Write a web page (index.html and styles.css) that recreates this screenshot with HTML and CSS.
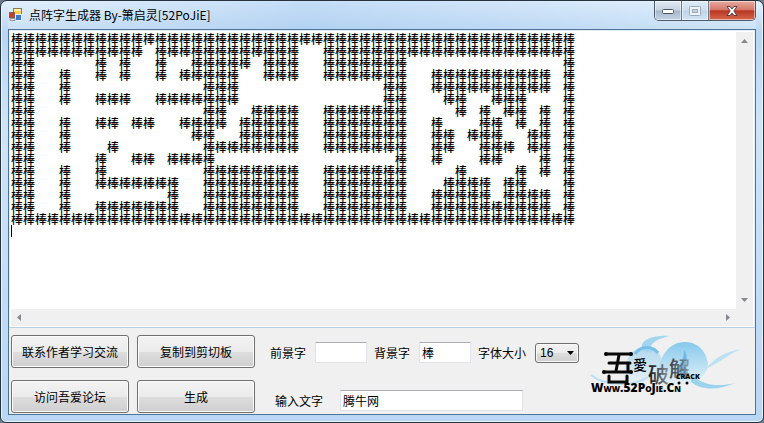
FILE: index.html
```
<!DOCTYPE html>
<html lang="zh-CN">
<head>
<meta charset="utf-8">
<title>点阵字生成器</title>
<link rel="stylesheet" href="styles.css">
</head>
<body>
<div class="window">
  <header class="titlebar">
    <svg class="app-icon" width="14" height="14" viewBox="0 0 14 14" aria-hidden="true">
      <rect x="4.5" y="0.5" width="8" height="7" fill="#ffd24a" stroke="#8d7a4c"/>
      <rect x="5" y="1" width="7" height="2" fill="#fff0b0"/>
      <rect x="0.5" y="4.5" width="5" height="5" fill="#c8402c" stroke="#8a5a50"/>
      <rect x="6.5" y="6.5" width="6" height="6" fill="#3f78d0" stroke="#e8eef8"/>
      <path d="M1 10.500h5v2H1z" fill="#e8e8e8" stroke="#999"/>
    </svg>
    <h1 class="title">点阵字生成器 By-箫启灵[52PoJiE]</h1>
    <div class="caption-buttons">
      <button class="caption minimize" type="button" aria-label="最小化">
        <svg width="14" height="8" viewBox="0 0 14 8"><rect x="1.500" y="2.500" width="11" height="4" rx="1" fill="#fff" stroke="#4c5565"/></svg>
      </button>
      <button class="caption maximize" type="button" aria-label="最大化" disabled>
        <svg width="12" height="10" viewBox="0 0 12 10"><rect x="0.500" y="0.500" width="11" height="9" rx="1" fill="#eef3f8" stroke="#9aa9bb"/><rect x="3.500" y="3.500" width="5" height="3" fill="#c6d4e2" stroke="#9aa9bb"/></svg>
      </button>
      <button class="caption close" type="button" aria-label="关闭">
        <svg width="12" height="10" viewBox="0 0 12 10"><path d="M1 .5h3L6 3 8 .5h3L7.800 5 11 9.500H8L6 7 4 9.500H1L4.200 5z" fill="#fff" stroke="#5b3a40"/></svg>
      </button>
    </div>
  </header>

  <main class="client">
    <section class="editor">
      <div class="paper">
        <textarea class="output" id="output" aria-label="点阵输出" wrap="off" spellcheck="false"></textarea>
        <span class="caret"></span>
      </div>
      <div class="scroll scroll-y">
        <svg width="7" height="4" viewBox="0 0 7 4"><path d="M0 4 3.500 0 7 4z" fill="#85888c"/></svg>
        <svg width="7" height="4" viewBox="0 0 7 4"><path d="M0 0h7L3.500 4z" fill="#85888c"/></svg>
      </div>
      <div class="scroll scroll-x">
        <svg width="4" height="7" viewBox="0 0 4 7"><path d="M4 0v7L0 3.500z" fill="#85888c"/></svg>
        <svg width="4" height="7" viewBox="0 0 4 7"><path d="M0 0v7l4-3.500z" fill="#85888c"/></svg>
      </div>
      <div class="scroll"></div>
    </section>

    <form class="panel">
      <div class="actions">
        <button class="push" type="button">联系作者学习交流</button>
        <button class="push" type="button">复制到剪切板</button>
        <button class="push" type="button">访问吾爱论坛</button>
        <button class="push" type="button">生成</button>
      </div>
      <div class="fields">
        <div class="row">
          <label for="fore">前景字</label>
          <input class="box short" id="fore" type="text" value="">
          <label for="back">背景字</label>
          <input class="box short" id="back" type="text" value="棒">
          <label for="size">字体大小</label>
          <span class="combo">
            <select id="size"><option>16</option></select>
            <svg class="combo-arrow" width="7" height="4" viewBox="0 0 7 4"><path d="M0 0h7L3.500 4z" fill="#000"/></svg>
          </span>
        </div>
        <div class="row second">
          <label for="words">输入文字</label>
          <input class="box long" id="words" type="text" value="腾牛网">
        </div>
      </div>
      <svg class="logo" width="156" height="68" viewBox="0 0 156 68" role="img" aria-label="吾爱破解">
        <defs>
          <linearGradient id="cloud" x1="0" y1="0" x2="0" y2="1">
            <stop offset="0" stop-color="#86c9ec"/><stop offset="1" stop-color="#e4f1f8"/>
          </linearGradient>
          <linearGradient id="ink" x1="0" y1="0" x2="1" y2="0">
            <stop offset="0" stop-color="#111"/><stop offset="1" stop-color="#8b959c"/>
          </linearGradient>
        </defs>
        <path d="M72 52C72 30 82 12 100 12c14 0 22 11 23 23-2 12-12 18-25 19z" fill="url(#cloud)"/>
        <path d="M40 50C38 34 44 20 56 18c11-2 19 4 21 12 3 12-5 20-17 24z" fill="url(#cloud)" opacity=".6"/>
        <path d="M99 20c6 8 0 14 3 20 4 6-3 9-8 6-4-3-3-8 1-12 3-4 4-9 4-14z" fill="#4fa9dd" opacity=".65"/>
        <path d="M85 6C70 5 56 9 57 17c1 5 7 7 12 4-8-6 2-12 16-15z" fill="#a2d6ef"/>
        <path d="M50 24c5-8 17-9 23-1" fill="none" stroke="#77c0e7" stroke-width="3"/>
        <path d="M157 19c-17 2-29 10-36 20 14-6 22-15 36-20z" fill="#bce1f2"/>
        <path d="M106 44c12 12 27 13 44 9-15 7-33 8-44-1z" fill="#9bd3ed"/>
        <path d="M6 45c12 10 40 13 57 2" fill="none" stroke="#b8dff1" stroke-width="2"/>
        <g fill="none" stroke="#080808" stroke-width="3" stroke-linecap="round">
          <path d="M21 24h25M24 33h21M19 42h27M34 25 31 41M43 33v8M24 46v6h18v-6"/>
        </g>
        <g fill="#080808"><circle cx="21" cy="24" r="2"/><circle cx="46" cy="24" r="2"/><circle cx="19" cy="42" r="2"/><circle cx="46" cy="42" r="2"/></g>
        <text class="logo-han" x="48" y="40" font-size="14">愛</text>
        <text class="logo-han" x="63" y="52" font-size="21" fill="url(#ink)">破</text>
        <text class="logo-han" x="84" y="46" font-size="21" fill="url(#ink)" opacity=".8">解</text>
        <text class="logo-latin" x="91" y="49" font-size="7">CRACK</text>
        <circle cx="94" cy="53" r="1.500"/><circle cx="102" cy="53" r="1.500"/>
        <text class="logo-latin" x="6" y="62" font-size="12">W<tspan font-size="8">WW</tspan>.52P<tspan font-size="8">O</tspan>J<tspan font-size="8">IE</tspan>.C<tspan font-size="8">N</tspan></text>
      </svg>
    </form>
  </main>
</div>
<script src="dots.js"></script>
</body>
</html>
```
FILE: styles.css
```
* {
  box-sizing: border-box;
}

body {
  margin: 0;
  background: #6d7b8c;
  color: #000;
  font: 12px/16px "Noto Sans CJK SC", sans-serif;
}

button,
input,
select,
textarea {
  margin: 0;
  color: inherit;
  font: inherit;
}

.window {
  display: flex;
  flex-direction: column;
  min-height: 100vh;
  padding: 0 7px 7px;
  border: 1px solid #27323f;
  border-radius: 7px 7px 6px 6px;
  background: linear-gradient(#e4f0fc, #b9d5f2 32px, #d0e4f8 120px, #b9d6f4);
  box-shadow: inset 0 0 0 1px #e9f4ff;
}

.titlebar {
  display: flex;
  align-items: center;
  gap: 6px;
  height: 28px;
  background: linear-gradient(90deg, #e0eefb66, #a9ccf088 40%, #bcd9f566 70%, #e4f1fc66);
}

.app-icon {
  margin-left: 1px;
}

.title {
  flex: 1;
  margin: 0;
  font-size: 12px;
  font-weight: 400;
  line-height: 16px;
}

.caption-buttons {
  display: flex;
  align-self: flex-start;
  overflow: hidden;
  border: 1px solid #4c5a6b;
  border-top: 0;
  border-radius: 0 0 5px 5px;
}

.caption {
  display: grid;
  place-items: center;
  width: 27px;
  height: 19px;
  padding: 0;
  border: 0;
  border-right: 1px solid #6c7b8d;
  background: linear-gradient(#e3ebf4, #c5d2e1 48%, #a5b6ca 52%, #c3d4e6);
  box-shadow: inset 0 0 0 1px #ffffff80;
}

.maximize {
  background: linear-gradient(#dfebf7, #cbdcee 50%, #bfd4ea 52%, #d2e4f6);
}

.close {
  width: 46px;
  border-right: 0;
  background: linear-gradient(#e8aa9f, #d4786a 46%, #b93621 52%, #d5694c);
}

.client {
  display: flex;
  flex: 1;
  flex-direction: column;
  border: 1px solid #4d7396;
  background: #f0f0f0;
}

.editor {
  display: grid;
  flex: 1;
  grid-template: 1fr 17px / 1fr 17px;
  padding: 1px;
  border: 1px solid #e3edf5;
  border-bottom-color: #b5cfe4;
  background: #fff;
}

.paper {
  display: flex;
  position: relative;
}

.output {
  flex: 1;
  min-width: 0;
  padding: 1px 0 0;
  overflow: hidden;
  border: 0;
  outline: 0;
  resize: none;
  font-weight: 500;
  line-height: 12px;
}

.caret {
  position: absolute;
  top: 193px;
  left: 0;
  width: 1px;
  height: 12px;
  background: #000;
}

.scroll {
  display: flex;
  align-items: center;
  justify-content: space-between;
  background: #f0f0f0;
}

.scroll-y {
  flex-direction: column;
  padding: 7px 0;
}

.scroll-x {
  padding: 0 6px;
}

.panel {
  display: flex;
  align-items: flex-start;
  padding: 7px 14px 1px 2px;
}

.actions {
  display: grid;
  grid-template-columns: 118px 118px;
  gap: 12px 8px;
}

.push {
  height: 33px;
  padding: 0;
  border: 1px solid #707070;
  border-radius: 3px;
  background: linear-gradient(#f3f3f3, #ebebeb 50%, #dddddd 52%, #cfcfcf);
  box-shadow: inset 0 0 0 1px #fbfbfb;
}

.fields {
  display: grid;
  flex: 1;
  gap: 27px;
  padding: 7px 0 0 15px;
}

.row {
  display: flex;
  align-items: center;
}

.second {
  padding-left: 5px;
}

.box {
  height: 21px;
  padding: 0 2px;
  border: 1px solid #e2e3ea;
  border-top-color: #abadb3;
  background: #fff;
}

.short {
  width: 52px;
  margin: 0 7px 0 9px;
}

.long {
  width: 183px;
  margin-left: 17px;
}

.combo {
  position: relative;
  margin-left: 9px;
}

.combo select {
  display: block;
  width: 44px;
  height: 20px;
  padding: 0 4px;
  appearance: none;
  border: 1px solid #707070;
  border-radius: 3px;
  background: linear-gradient(#f2f2f2, #ebebeb 50%, #dddddd 52%, #cfcfcf);
  box-shadow: inset 0 0 0 1px #f8f8f8;
  font-family: "Liberation Sans", sans-serif;
}

.combo-arrow {
  position: absolute;
  top: 8px;
  right: 5px;
}

.logo {
  flex: none;
  margin-top: -5px;
}

.logo-han {
  font-family: "Noto Sans CJK TC", sans-serif;
  font-weight: 500;
}

.logo-latin {
  font-family: "Open Sans", sans-serif;
  font-weight: 800;
}
```
FILE: dots.js
```
// Column ranges filled with the background character, one entry per line.
const ink = "棒";
const blank = "\u3000";
const lines = [
  "0-46",
  "0-10 12-23 26-46",
  "0-1 7 9 12 15-19 21-23 26-32 46",
  "0-1 4 7 9 12 14-18 21-23 26-32 35-44 46",
  "0-1 4 16-18 31-32 35-44 46",
  "0-1 4 7-9 12-18 31-32 36-37 40-42 46",
  "0-1 16-17 20-23 26-32 37 39 41-42 44 46",
  "0-1 4 7-8 10-11 14-17 19-23 26-32 35 39-40 42 44 46",
  "0-1 4 15-16 19-23 26-32 35-36 38-40 43-44 46",
  "0-1 4 8 16-23 26-32 35-36 39-41 43-44 46",
  "0-1 7 10-11 13-16 32 35 39-40 44 46",
  "0-1 4 7 16-23 26-32 37 42 44 46",
  "0-1 4 7-13 16-23 26-32 36-39 41-42 46",
  "0-1 4 13 16-23 26-32 35-39 41-44 46",
  "0-1 4 7-13 16-23 26-32 35-44 46",
  "0-46"
];

document.getElementById("output").value = lines.map(line => {
  const cells = Array(47).fill(blank);
  for (const range of line.split(" ")) {
    const [from, to = from] = range.split("-").map(Number);
    cells.fill(ink, from, to + 1);
  }
  return cells.join("");
}).join("\n");
```
